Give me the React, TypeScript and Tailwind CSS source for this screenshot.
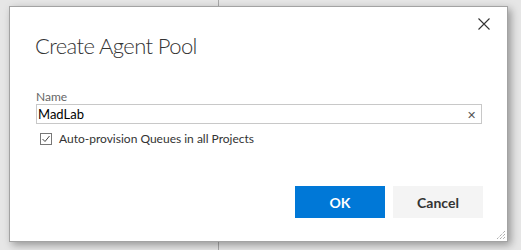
import { useState } from 'react';

function CloseIcon({ size }: { size: number }) {
  return (
    <svg width={size} height={size} viewBox="0 0 12 12" fill="none">
      <path d="M0.5 0.5 L11.5 11.5 M11.5 0.5 L0.5 11.5" stroke="#333" strokeWidth="1.1" />
    </svg>
  );
}

function ResizeGrip() {
  return (
    <svg width="10" height="10" viewBox="0 0 10 10" className="absolute bottom-[1px] right-[1px]">
      <path d="M9 1 L1 9 M9 4 L4 9 M9 7 L7 9" stroke="#8a8a8a" strokeWidth="1" strokeDasharray="1 1" />
    </svg>
  );
}

export default function App() {
  const [name, setName] = useState('MadLab');
  const [autoProvision, setAutoProvision] = useState(true);

  return (
    <div
      className="relative h-[250px] w-[521px] overflow-hidden bg-[#e6e6e6]"
      style={{ fontFamily: 'Lato, "Open Sans", sans-serif' }}
    >
      {/* page behind the dialog */}
      <div className="absolute left-[218px] top-0 h-full w-px bg-[#a8a8a8]" />

      <div className="absolute left-[9px] top-[6px] flex h-[236px] w-[499px] flex-col border border-[#a3a3a3] bg-white shadow-[3px_3px_8px_rgba(0,0,0,0.35)]">
        <button type="button" className="absolute right-[17px] top-[11px]">
          <CloseIcon size={12} />
        </button>

        <h1 className="pl-[25px] pt-[23px] text-[22px] font-light leading-[32px] tracking-[-0.6px] text-[#333]">
          Create Agent Pool
        </h1>

        <div className="flex flex-col pl-[26px] pt-[28px]">
          <label className="text-[12px] leading-[14px] text-[#666]">Name</label>
          <div className="flex h-[20px] w-[446px] items-center border border-[#c8c8c8] pl-[1px] pr-[4px]">
            <input
              value={name}
              onChange={(e) => setName(e.target.value)}
              className="h-full flex-1 bg-transparent text-[13px] text-black outline-none"
            />
            <span className="mr-[1px] mt-[1px] text-[11px] leading-none text-[#555]">✕</span>
          </div>

          <label className="ml-[4px] mt-[8px] flex items-center gap-[7px] text-[12px] leading-[14px] text-[#333]">
            <span
              onClick={() => setAutoProvision(!autoProvision)}
              className="flex h-[12px] w-[12px] items-center justify-center border border-[#777]"
            >
              {autoProvision && (
                <svg width="10" height="10" viewBox="0 0 10 10">
                  <path d="M1.5 5 L4 7.5 L8.5 2" stroke="#444" strokeWidth="1" fill="none" />
                </svg>
              )}
            </span>
            Auto-provision Queues in all Projects
          </label>
        </div>

        <div className="mt-auto flex justify-end gap-[8px] pb-[23px] pr-[24px]">
          <button type="button" className="h-[32px] w-[90px] bg-[#0078d7] text-[14px] font-bold text-white">
            OK
          </button>
          <button type="button" className="h-[32px] w-[90px] bg-[#f4f4f4] text-[14px] font-bold text-[#333]">
            Cancel
          </button>
        </div>

        <ResizeGrip />
      </div>
    </div>
  );
}
